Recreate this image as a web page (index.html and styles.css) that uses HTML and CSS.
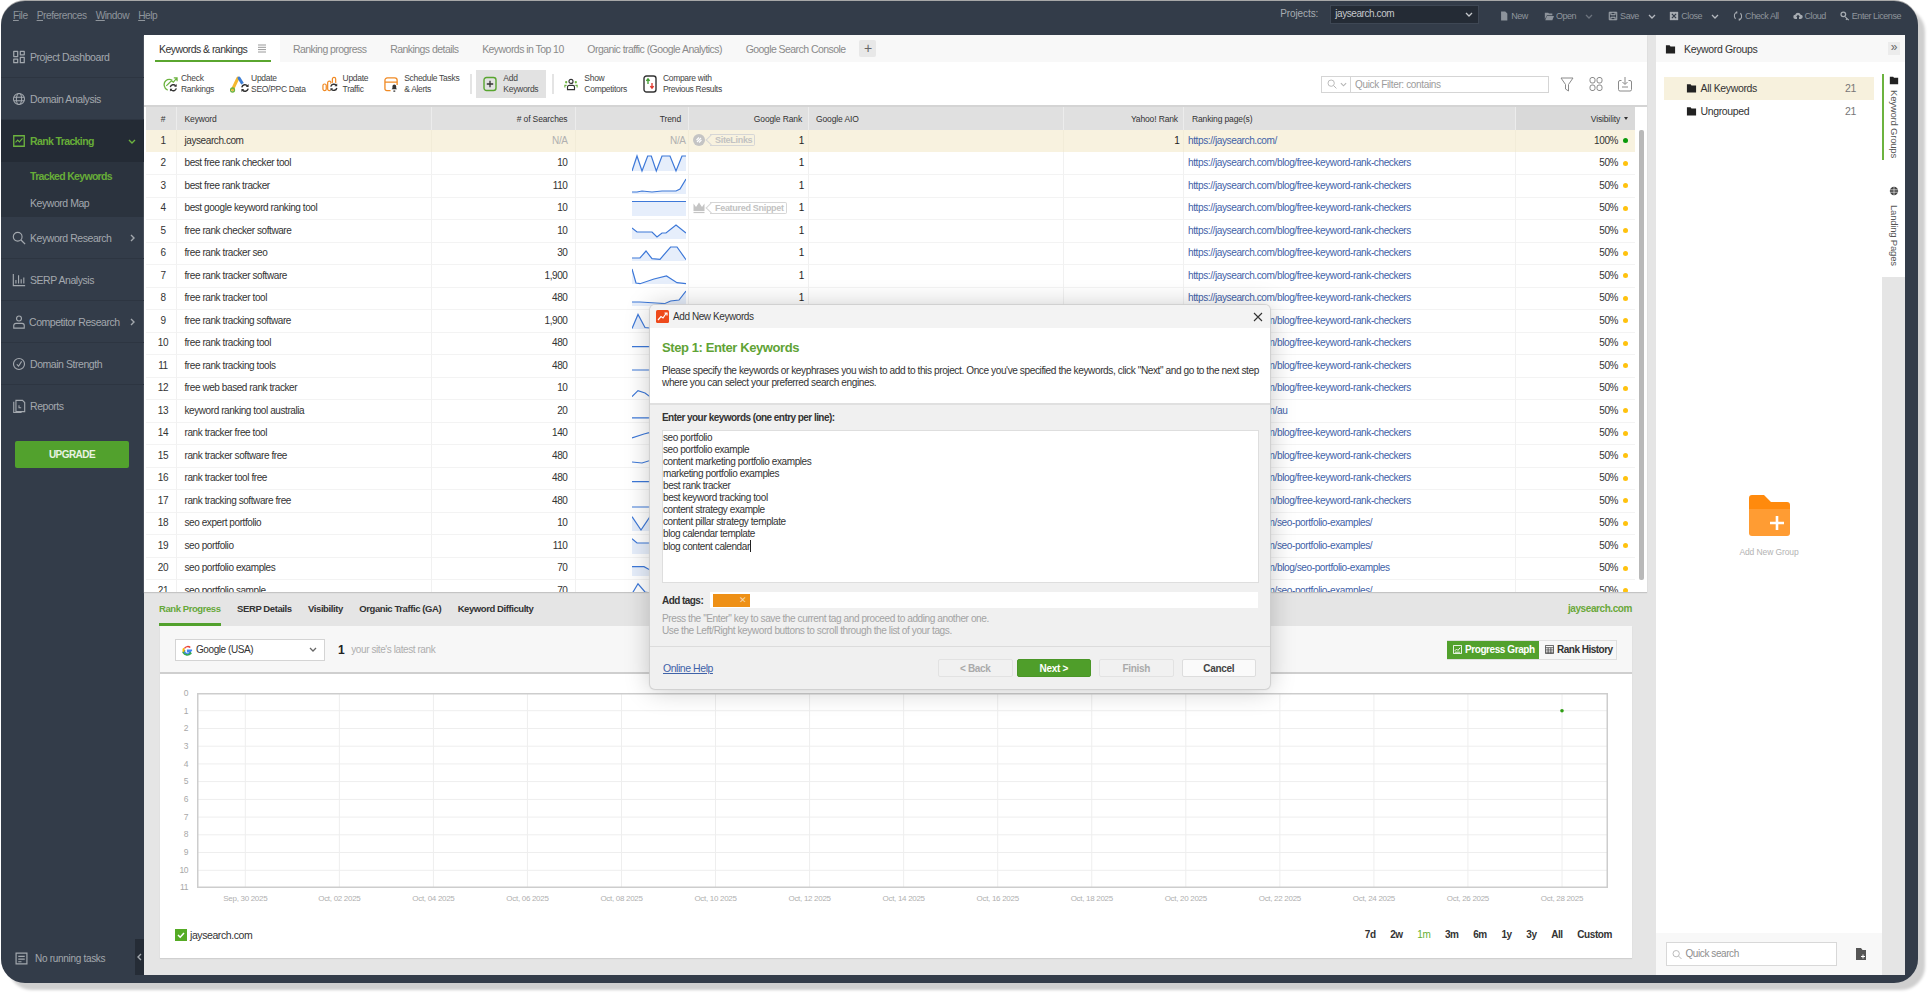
FILE: index.html
```html
<!DOCTYPE html>
<html lang="en">
<head>
<meta charset="utf-8">
<title>Rank Tracker</title>
<link rel="stylesheet" href="styles.css">
</head>
<body>
<svg class="defs" width="0" height="0" aria-hidden="true">
  <symbol id="refresh" viewBox="0 0 10 10"><circle cx="5" cy="5" r="5" fill="#fff"/><path d="M1.8 4.3A3.3 3.3 0 0 1 7.6 3M8.2 5.7A3.3 3.3 0 0 1 2.4 7" fill="none" stroke="#333" stroke-width="1.5"/><path d="M8.6 1v3H5.8zM1.4 9V6h2.8z" fill="#333"/></symbol>
  <symbol id="folder" viewBox="0 0 12 12"><path d="M1 2h4l1 1.3h5V11H1z" fill="#222"/></symbol>
  <symbol id="caret" viewBox="0 0 8 5"><path d="M1 1l3 3 3-3" fill="none" stroke="currentColor" stroke-width="1.3"/></symbol>
</svg>
<div class="window">
  <header class="topbar">
    <nav class="menu"><span><u>F</u>ile</span><span><u>P</u>references</span><span><u>W</u>indow</span><span><u>H</u>elp</span></nav>
    <div class="projects">
      <span class="projects-label">Projects:</span>
      <div class="project-select"><span>jaysearch.com</span><svg class="ic-caret"><use href="#caret"/></svg></div>
    </div>
    <div class="tools">
      <span class="tool t-new"><svg class="tic" viewBox="0 0 12 12"><path d="M2.5 0.5h5l2.5 2.5v8.500h-7.5z" fill="#8d939b"/></svg>New</span>
      <span class="tool t-open"><svg class="tic" viewBox="0 0 12 12"><path d="M1 2h4l1 1h4v2H3.500L1 10zM3.500 6H12l-2 5H1.500z" fill="#8d939b"/></svg>Open<svg class="tcaret dim"><use href="#caret"/></svg></span>
      <span class="tool t-save"><svg class="tic" viewBox="0 0 12 12"><path d="M1.500 1.500h9v9h-9zM3.500 1.500v3h5v-3M3.500 10.500v-3h5v3" fill="none" stroke="#a7acb2" stroke-width="1.200"/></svg>Save<svg class="tcaret"><use href="#caret"/></svg></span>
      <span class="tool t-close"><svg class="tic" viewBox="0 0 12 12"><path d="M1 1h10v10H1z" fill="#a7acb2"/><path d="M3.500 3.500l5 5M8.500 3.500l-5 5" stroke="#333c49" stroke-width="1.500"/></svg>Close<svg class="tcaret"><use href="#caret"/></svg></span>
      <span class="tool t-check"><svg class="tic" viewBox="0 0 12 12"><path d="M5 1.500C1.500 2 .5 6 3 9.500M7 10.500C10.500 10 11.500 6 9 2.500" fill="none" stroke="#a7acb2" stroke-width="1.300"/><path d="M5 0v3.500L2.800 1.500zM7 12V8.500l2.200 2z" fill="#a7acb2"/></svg>Check All</span>
      <span class="tool t-cloud"><svg class="tic" viewBox="0 0 12 12"><path d="M3 9.500a2.500 2.500 0 0 1-.3-5 3.400 3.400 0 0 1 6.500 0 2.500 2.500 0 0 1 0 5H7.200V7h1.300L6 4.500 3.500 7h1.300v2.500z" fill="#a7acb2"/></svg>Cloud</span>
      <span class="tool t-lic"><svg class="tic" viewBox="0 0 12 12"><circle cx="4" cy="4" r="2.800" fill="none" stroke="#a7acb2" stroke-width="1.500"/><path d="M6 6l5 4.500-1 1-1.500-1.300-1 .8-.8-1L7.500 9 5.200 7z" fill="#a7acb2"/></svg>Enter License</span>
    </div>
  </header>

  <div class="body">
    <aside class="sidebar">
      <a class="nav"><svg class="nic" viewBox="0 0 16 16"><path d="M2 1.500h4.500v6H2zM9.500 1.500H14v4H9.500zM2 10.500h4.500v4H2zM9.500 8.500H14v6H9.500z" fill="none" stroke="#a3a8ae" stroke-width="1.400" stroke-linejoin="round"/></svg>Project Dashboard</a>
      <a class="nav"><svg class="nic" viewBox="0 0 16 16"><g fill="none" stroke="#a3a8ae" stroke-width="1.200"><circle cx="8" cy="8" r="6.300"/><ellipse cx="8" cy="8" rx="3" ry="6.300"/><path d="M2 6h12M2 10h12"/></g></svg>Domain Analysis</a>
      <a class="nav nav-active"><svg class="nic" viewBox="0 0 16 16"><path d="M2 2h12v12H2z" fill="none" stroke="#6cb33f" stroke-width="1.500"/><path d="M4 9.500l2.500-2.500 2 2 3.500-4" fill="none" stroke="#6cb33f" stroke-width="1.300"/></svg>Rank Tracking<svg class="chev chev-down" viewBox="0 0 8 5"><path d="M1 1l3 3 3-3" fill="none" stroke="#6cb33f" stroke-width="1.400"/></svg></a>
      <div class="subnav">
        <a class="sub sub-active">Tracked Keywords</a>
        <a class="sub">Keyword Map</a>
      </div>
      <a class="nav"><svg class="nic" viewBox="0 0 16 16"><circle cx="6.500" cy="6.500" r="5" fill="none" stroke="#a3a8ae" stroke-width="1.300"/><path d="M10.300 10.300L15 15" stroke="#a3a8ae" stroke-width="1.500"/></svg>Keyword Research<svg class="chev" viewBox="0 0 5 8"><path d="M1 1l3 3-3 3" fill="none" stroke="#a3a8ae" stroke-width="1.400"/></svg></a>
      <a class="nav"><svg class="nic" viewBox="0 0 16 16"><path d="M1.500 1v13.500H15M4.500 8v4M7.500 2.500V12M10.500 7v5M13.500 5v7" fill="none" stroke="#a3a8ae" stroke-width="1.300"/></svg>SERP Analysis</a>
      <a class="nav nav-tight"><svg class="nic" viewBox="0 0 16 16"><circle cx="8" cy="4" r="2.800" fill="none" stroke="#a3a8ae" stroke-width="1.300"/><path d="M2 15v-3a2.500 2.500 0 0 1 2.500-2.500h7A2.500 2.500 0 0 1 14 12v3z" fill="none" stroke="#a3a8ae" stroke-width="1.300"/></svg>Competitor Research<svg class="chev" viewBox="0 0 5 8"><path d="M1 1l3 3-3 3" fill="none" stroke="#a3a8ae" stroke-width="1.400"/></svg></a>
      <a class="nav"><svg class="nic" viewBox="0 0 16 16"><circle cx="8" cy="8" r="6.300" fill="none" stroke="#a3a8ae" stroke-width="1.300"/><path d="M5.500 8.500L7.500 10.500 11 5" fill="none" stroke="#a3a8ae" stroke-width="1.300"/></svg>Domain Strength</a>
      <a class="nav nav-last"><svg class="nic" viewBox="0 0 16 16"><path d="M4.500 1.500H12l2.500 2.500v10.500h-10zM2 3v12.500h9" fill="none" stroke="#a3a8ae" stroke-width="1.300"/><path d="M8 7v3h2.500" fill="none" stroke="#a3a8ae" stroke-width="1.200"/></svg>Reports</a>
      <button class="upgrade">UPGRADE</button>
      <div class="side-foot">
        <svg class="task-ic" viewBox="0 0 12 12"><path d="M1 1h10v10H1zM3 4h6M3 6.500h6M3 9h3" fill="none" stroke="#a3a8ae" stroke-width="1.100"/></svg>
        <span class="task-text">No running tasks</span>
        <span class="collapse"><svg viewBox="0 0 5 8"><path d="M4 1L1 4l3 3" fill="none" stroke="#a3a8ae" stroke-width="1.400"/></svg></span>
      </div>
    </aside>

    <main class="main">
      <section class="top-pane">
        <div class="tabs">
          <div class="tab tab-active">Keywords &amp; rankings<svg class="tab-menu" viewBox="0 0 8 9"><path d="M0 1h8M0 3.300h8M0 5.600h8M0 8h8" stroke="#999" stroke-width="1"/></svg></div>
          <div class="tab">Ranking progress</div>
          <div class="tab">Rankings details</div>
          <div class="tab">Keywords in Top 10</div>
          <div class="tab">Organic traffic (Google Analytics)</div>
          <div class="tab">Google Search Console</div>
          <div class="tab-add">+</div>
        </div>
        <div class="toolbar">
          <div class="tb tb-check"><svg class="tbi w15" viewBox="0 0 16 18"><path d="M5 15.500C1 14 0 8 3 5.500 5 3.800 8 4 10 5" fill="none" stroke="#6cb33f" stroke-width="1.400"/><path d="M3.500 11L9 5.500l2 1.500 3.500-4M11.500 2.500h3.500V6" fill="none" stroke="#6cb33f" stroke-width="1.300"/><use href="#refresh" x="6" y="8" width="10" height="10"/></svg><span>Check<br>Rankings</span></div>
          <div class="tb tb-ads"><svg class="tbi w20" viewBox="0 0 20 18"><path d="M2.500 14.500L8 3" stroke="#f5b82e" stroke-width="3" stroke-linecap="round"/><path d="M9 3l5.500 9" stroke="#3f7fd6" stroke-width="3" stroke-linecap="round" fill="none"/><circle cx="2.500" cy="15" r="2" fill="none" stroke="#6cb33f" stroke-width="1.300"/><use href="#refresh" x="10" y="8" width="10" height="10"/></svg><span>Update<br>SEO/PPC Data</span></div>
          <div class="tb"><svg class="tbi w17" viewBox="0 0 18 18"><g fill="none" stroke="#f08a24" stroke-width="1.300"><rect x="1" y="9" width="3.500" height="7" rx="1.700"/><rect x="6" y="6" width="3.500" height="10" rx="1.700"/><rect x="11" y="2" width="3.500" height="8" rx="1.700"/></g><use href="#refresh" x="7.500" y="7.500" width="10" height="10"/></svg><span>Update<br>Traffic</span></div>
          <div class="tb tb-sched"><svg class="tbi w15" viewBox="0 0 16 18"><path d="M7 16H3a2 2 0 0 1-2-2V5a2.500 2.500 0 0 1 2.500-2.500h8A2.500 2.500 0 0 1 14 5v5M1 7h13" fill="none" stroke="#f08a24" stroke-width="1.400"/><path d="M11 9.500a2 2 0 0 1 2 2v2l1 1.200H8l1-1.200v-2a2 2 0 0 1 2-2zM10 16h2v1.200h-2z" fill="#333"/></svg><span>Schedule Tasks<br>&amp; Alerts</span></div>
          <i class="tsep tsep-a"></i>
          <div class="tb tb-on"><svg class="tbi w14" viewBox="0 0 14 16"><rect x="1" y="1.500" width="12" height="13" rx="2.500" fill="none" stroke="#58a52f" stroke-width="1.400"/><path d="M7 4.800v6.400M3.800 8h6.400" stroke="#333" stroke-width="1.300"/></svg><span>Add<br>Keywords</span></div>
          <i class="tsep tsep-b"></i>
          <div class="tb tb-show"><svg class="tbi w14" viewBox="0 0 16 16"><circle cx="8" cy="5" r="2.300" fill="none" stroke="#333" stroke-width="1.300"/><path d="M4 14.500v-3a2 2 0 0 1 2-2h4a2 2 0 0 1 2 2v3z" fill="none" stroke="#333" stroke-width="1.300"/><circle cx="2.500" cy="6" r="1.300" fill="#6cb33f"/><circle cx="13.500" cy="6" r="1.300" fill="#6cb33f"/><path d="M1 12v-2.500h2M15 12V9.500h-2" fill="none" stroke="#6cb33f" stroke-width="1.300"/></svg><span>Show<br>Competitors</span></div>
          <div class="tb tb-cmp"><svg class="tbi w14" viewBox="0 0 14 18"><rect x="1" y="1" width="12" height="16" rx="2.500" fill="none" stroke="#333" stroke-width="1.400"/><path d="M5 9V4M3.300 5.800L5 3.800l1.700 2" fill="none" stroke="#3f9c2e" stroke-width="1.300"/><path d="M9 8v5M7.300 11.200L9 13.200l1.700-2" fill="none" stroke="#e0352b" stroke-width="1.300"/></svg><span>Compare with<br>Previous Results</span></div>
          <div class="tb-right">
            <div class="qfilter">
              <span class="qf-drop"><svg class="qf-s" viewBox="0 0 12 12"><circle cx="5" cy="5" r="3.800" fill="none" stroke="#b5b5b5" stroke-width="1.100"/><path d="M8 8l3.300 3.300" stroke="#b5b5b5" stroke-width="1.200"/></svg><svg class="qf-c"><use href="#caret"/></svg></span>
              <span class="qf-text">Quick Filter: contains</span>
            </div>
            <svg class="ri" viewBox="0 0 16 16"><path d="M2 2h12L9.500 8.500V15L6.500 13V8.500z" fill="none" stroke="#8a8a8a" stroke-width="1"/></svg>
            <svg class="ri" viewBox="0 0 16 16"><g fill="none" stroke="#8a8a8a" stroke-width="1"><rect x="2" y="1.500" width="5" height="5.500" rx="2"/><rect x="9" y="1.500" width="5" height="5.500" rx="2"/><rect x="2" y="9" width="5" height="5.500" rx="2"/><rect x="9" y="9" width="5" height="5.500" rx="2"/></g></svg>
            <svg class="ri" viewBox="0 0 16 16"><path d="M4.500 4.500H3a1.500 1.500 0 0 0-1.500 1.500v7.500A1.500 1.500 0 0 0 3 15h10a1.500 1.500 0 0 0 1.500-1.500V6A1.500 1.500 0 0 0 13 4.500h-1.500M8 1v7M5.500 6L8 8.500 10.500 6M5 11h6" fill="none" stroke="#8a8a8a" stroke-width="1"/></svg>
          </div>
        </div>
        <div class="table-wrap">
          <div class="table">
            <div class="row head">
              <span class="c-n">#</span><span class="c-k">Keyword</span><span class="c-s"># of Searches</span><span class="c-t">Trend</span><span class="c-g">Google Rank</span><span class="c-a">Google AIO</span><span class="c-y">Yahoo! Rank</span><span class="c-l">Ranking page(s)</span><span class="c-v c-sorted">Visibility<i class="sort"></i></span>
            </div>
            <div class="rows">
              <div class="row row-sel"><span class="c-n">1</span><span class="c-k">jaysearch.com</span><span class="c-s na">N/A</span><span class="c-t na">N/A</span><span class="c-g"><svg class="serp" viewBox="0 0 12 12"><circle cx="6" cy="6" r="6" fill="#c4c4c4"/><path d="M4 8l4-4M3.500 6L6 3.500M6 8.500L8.500 6" stroke="#fff" stroke-width="1.100"/></svg><span class="tag">SiteLinks</span><b class="rk">1</b></span><span class="c-a"></span><span class="c-y"><b class="rk">1</b></span><a class="c-l">https://jaysearch.com/</a><span class="c-v">100%<i class="dot dot-g"></i></span></div>
              <div class="row"><span class="c-n">2</span><span class="c-k">best free rank checker tool</span><span class="c-s">10</span><span class="c-t"><svg class="spark" viewBox="0 0 54 22"><polygon class="sf" points="0,19 5,4 10,19 15.700,4 19.300,4 24.300,19 30,4 38,4 44,19 50,4 54,4 54,19"/><polyline class="sl" points="0,19 5,4 10,19 15.700,4 19.300,4 24.300,19 30,4 38,4 44,19 50,4 54,4"/></svg></span><span class="c-g"><b class="rk">1</b></span><span class="c-a"></span><span class="c-y"></span><a class="c-l">https://jaysearch.com/blog/free-keyword-rank-checkers</a><span class="c-v">50%<i class="dot"></i></span></div>
              <div class="row"><span class="c-n">3</span><span class="c-k">best free rank tracker</span><span class="c-s">110</span><span class="c-t"><svg class="spark" viewBox="0 0 54 22"><polygon class="sf" points="0,17 5,17 10,16 20,17 30,16 44,16 48,14 54,4 54,19 0,19"/><polyline class="sl" points="0,17 5,17 10,16 20,17 30,16 44,16 48,14 54,4"/></svg></span><span class="c-g"><b class="rk">1</b></span><span class="c-a"></span><span class="c-y"></span><a class="c-l">https://jaysearch.com/blog/free-keyword-rank-checkers</a><span class="c-v">50%<i class="dot"></i></span></div>
              <div class="row"><span class="c-n">4</span><span class="c-k">best google keyword ranking tool</span><span class="c-s">10</span><span class="c-t"><svg class="spark" viewBox="0 0 54 22"><polygon class="sf" points="0,4.500 54,4.500 54,19 0,19"/><polyline class="sl" points="0,4.500 54,4.500"/></svg></span><span class="c-g"><svg class="serp" viewBox="0 0 12 12"><path d="M0.500 1.500L3 5 6 0.500 9 5l2.500-3.500V9H.5z" fill="#c4c4c4"/><path d="M.5 10.500h11" stroke="#c4c4c4" stroke-width="1.200"/></svg><span class="tag">Featured Snippet</span><b class="rk">1</b></span><span class="c-a"></span><span class="c-y"></span><a class="c-l">https://jaysearch.com/blog/free-keyword-rank-checkers</a><span class="c-v">50%<i class="dot"></i></span></div>
              <div class="row"><span class="c-n">5</span><span class="c-k">free rank checker software</span><span class="c-s">10</span><span class="c-t"><svg class="spark" viewBox="0 0 54 22"><polygon class="sf" points="0,8 5,12 20,12 25,17 30,13 34,13 44,5 54,13 54,19 0,19"/><polyline class="sl" points="0,8 5,12 20,12 25,17 30,13 34,13 44,5 54,13"/></svg></span><span class="c-g"><b class="rk">1</b></span><span class="c-a"></span><span class="c-y"></span><a class="c-l">https://jaysearch.com/blog/free-keyword-rank-checkers</a><span class="c-v">50%<i class="dot"></i></span></div>
              <div class="row"><span class="c-n">6</span><span class="c-k">free rank tracker seo</span><span class="c-s">30</span><span class="c-t"><svg class="spark" viewBox="0 0 54 22"><polygon class="sf" points="0,16 8,16 14,9 20,16.700 28,17.300 38.600,5 45,5 54,17.700 54,19 0,19"/><polyline class="sl" points="0,16 8,16 14,9 20,16.700 28,17.300 38.600,5 45,5 54,17.700"/></svg></span><span class="c-g"><b class="rk">1</b></span><span class="c-a"></span><span class="c-y"></span><a class="c-l">https://jaysearch.com/blog/free-keyword-rank-checkers</a><span class="c-v">50%<i class="dot"></i></span></div>
              <div class="row"><span class="c-n">7</span><span class="c-k">free rank tracker software</span><span class="c-s">1,900</span><span class="c-t"><svg class="spark" viewBox="0 0 54 22"><polygon class="sf" points="0,4 4,18 8,18.700 22,14 34.500,11 45,17.700 54,18.700 54,19 0,19"/><polyline class="sl" points="0,4 4,18 8,18.700 22,14 34.500,11 45,17.700 54,18.700"/></svg></span><span class="c-g"><b class="rk">1</b></span><span class="c-a"></span><span class="c-y"></span><a class="c-l">https://jaysearch.com/blog/free-keyword-rank-checkers</a><span class="c-v">50%<i class="dot"></i></span></div>
              <div class="row"><span class="c-n">8</span><span class="c-k">free rank tracker tool</span><span class="c-s">480</span><span class="c-t"><svg class="spark" viewBox="0 0 54 22"><polygon class="sf" points="0,15 8,15 24,16 32.500,16.700 38.600,14 47,13 54,4 54,19 0,19"/><polyline class="sl" points="0,15 8,15 24,16 32.500,16.700 38.600,14 47,13 54,4"/></svg></span><span class="c-g"><b class="rk">1</b></span><span class="c-a"></span><span class="c-y"></span><a class="c-l">https://jaysearch.com/blog/free-keyword-rank-checkers</a><span class="c-v">50%<i class="dot"></i></span></div>
              <div class="row"><span class="c-n">9</span><span class="c-k">free rank tracking software</span><span class="c-s">1,900</span><span class="c-t"><svg class="spark" viewBox="0 0 54 22"><polygon class="sf" points="0,18.500 6,4.500 13,17.500 18,18 54,18 54,19 0,19"/><polyline class="sl" points="0,18.500 6,4.500 13,17.500 18,18 54,18"/></svg></span><span class="c-g"><b class="rk">1</b></span><span class="c-a"></span><span class="c-y"></span><a class="c-l">https://jaysearch.com/blog/free-keyword-rank-checkers</a><span class="c-v">50%<i class="dot"></i></span></div>
              <div class="row"><span class="c-n">10</span><span class="c-k">free rank tracking tool</span><span class="c-s">480</span><span class="c-t"><svg class="spark" viewBox="0 0 54 22"><polyline class="sl" points="0,14.700 54,14.700"/></svg></span><span class="c-g"><b class="rk">1</b></span><span class="c-a"></span><span class="c-y"></span><a class="c-l">https://jaysearch.com/blog/free-keyword-rank-checkers</a><span class="c-v">50%<i class="dot"></i></span></div>
              <div class="row"><span class="c-n">11</span><span class="c-k">free rank tracking tools</span><span class="c-s">480</span><span class="c-t"><svg class="spark" viewBox="0 0 54 22"><polyline class="sl" points="0,15 54,15"/></svg></span><span class="c-g"><b class="rk">1</b></span><span class="c-a"></span><span class="c-y"></span><a class="c-l">https://jaysearch.com/blog/free-keyword-rank-checkers</a><span class="c-v">50%<i class="dot"></i></span></div>
              <div class="row"><span class="c-n">12</span><span class="c-k">free web based rank tracker</span><span class="c-s">10</span><span class="c-t"><svg class="spark" viewBox="0 0 54 22"><polyline class="sl" points="0,19.700 6,13.700 13,16 18,19.700 54,19"/></svg></span><span class="c-g"><b class="rk">1</b></span><span class="c-a"></span><span class="c-y"></span><a class="c-l">https://jaysearch.com/blog/free-keyword-rank-checkers</a><span class="c-v">50%<i class="dot"></i></span></div>
              <div class="row"><span class="c-n">13</span><span class="c-k">keyword ranking tool australia</span><span class="c-s">20</span><span class="c-t"><svg class="spark" viewBox="0 0 54 22"><polyline class="sl" points="0,17.800 54,17.800"/></svg></span><span class="c-g"><b class="rk">1</b></span><span class="c-a"></span><span class="c-y"></span><a class="c-l">https://jaysearch.com/au</a><span class="c-v">50%<i class="dot"></i></span></div>
              <div class="row"><span class="c-n">14</span><span class="c-k">rank tracker free tool</span><span class="c-s">140</span><span class="c-t"><svg class="spark" viewBox="0 0 54 22"><polyline class="sl" points="0,16 12,12 17,10.700 20,12 54,12"/></svg></span><span class="c-g"><b class="rk">1</b></span><span class="c-a"></span><span class="c-y"></span><a class="c-l">https://jaysearch.com/blog/free-keyword-rank-checkers</a><span class="c-v">50%<i class="dot"></i></span></div>
              <div class="row"><span class="c-n">15</span><span class="c-k">rank tracker software free</span><span class="c-s">480</span><span class="c-t"><svg class="spark" viewBox="0 0 54 22"><polyline class="sl" points="0,17 10,18 18,15.500 54,15.500"/></svg></span><span class="c-g"><b class="rk">1</b></span><span class="c-a"></span><span class="c-y"></span><a class="c-l">https://jaysearch.com/blog/free-keyword-rank-checkers</a><span class="c-v">50%<i class="dot"></i></span></div>
              <div class="row"><span class="c-n">16</span><span class="c-k">rank tracker tool free</span><span class="c-s">480</span><span class="c-t"><svg class="spark" viewBox="0 0 54 22"><polyline class="sl" points="0,14.700 54,14.700"/></svg></span><span class="c-g"><b class="rk">1</b></span><span class="c-a"></span><span class="c-y"></span><a class="c-l">https://jaysearch.com/blog/free-keyword-rank-checkers</a><span class="c-v">50%<i class="dot"></i></span></div>
              <div class="row"><span class="c-n">17</span><span class="c-k">rank tracking software free</span><span class="c-s">480</span><span class="c-t"><svg class="spark" viewBox="0 0 54 22"><polyline class="sl" points="0,17 54,17"/></svg></span><span class="c-g"><b class="rk">1</b></span><span class="c-a"></span><span class="c-y"></span><a class="c-l">https://jaysearch.com/blog/free-keyword-rank-checkers</a><span class="c-v">50%<i class="dot"></i></span></div>
              <div class="row"><span class="c-n">18</span><span class="c-k">seo expert portfolio</span><span class="c-s">10</span><span class="c-t"><svg class="spark" viewBox="0 0 54 22"><polygon class="sf" points="0,4.700 9,18 18,4.700 54,4.700 54,19 0,19"/><polyline class="sl" points="0,4.700 9,18 18,4.700 54,4.700"/></svg></span><span class="c-g"><b class="rk">1</b></span><span class="c-a"></span><span class="c-y"></span><a class="c-l">https://jaysearch.com/seo-portfolio-examples/</a><span class="c-v">50%<i class="dot"></i></span></div>
              <div class="row"><span class="c-n">19</span><span class="c-k">seo portfolio</span><span class="c-s">110</span><span class="c-t"><svg class="spark" viewBox="0 0 54 22"><polygon class="sf" points="0,3.800 5,8 54,8 54,19 0,19"/><polyline class="sl" points="0,3.800 5,8 54,8"/></svg></span><span class="c-g"><b class="rk">1</b></span><span class="c-a"></span><span class="c-y"></span><a class="c-l">https://jaysearch.com/seo-portfolio-examples/</a><span class="c-v">50%<i class="dot"></i></span></div>
              <div class="row"><span class="c-n">20</span><span class="c-k">seo portfolio examples</span><span class="c-s">70</span><span class="c-t"><svg class="spark" viewBox="0 0 54 22"><polygon class="sf" points="0,9.700 12,9.700 18,13 54,13 54,19 0,19"/><polyline class="sl" points="0,9.700 12,9.700 18,13 54,13"/></svg></span><span class="c-g"><b class="rk">1</b></span><span class="c-a"></span><span class="c-y"></span><a class="c-l">https://jaysearch.com/blog/seo-portfolio-examples</a><span class="c-v">50%<i class="dot"></i></span></div>
              <div class="row"><span class="c-n">21</span><span class="c-k">seo portfolio sample</span><span class="c-s">70</span><span class="c-t"><svg class="spark" viewBox="0 0 54 22"><polyline class="sl" points="0,13.800 6,3.800 13,12 18,13 54,13"/></svg></span><span class="c-g"><b class="rk">1</b></span><span class="c-a"></span><span class="c-y"></span><a class="c-l">https://jaysearch.com/seo-portfolio-examples/</a><span class="c-v">50%<i class="dot"></i></span></div>
            </div>
          </div>
          <div class="vscroll"><i></i></div>
        </div>
      </section>

      <section class="bottom-pane">
        <div class="btabs">
          <span class="btab btab-active">Rank Progress</span>
          <span class="btab">SERP Details</span>
          <span class="btab">Visibility</span>
          <span class="btab">Organic Traffic (GA)</span>
          <span class="btab">Keyword Difficulty</span>
          <span class="btabs-site">jaysearch.com</span>
        </div>
        <div class="card">
          <div class="card-head">
            <div class="engine"><svg class="g-logo" viewBox="0 0 12 12"><path d="M11 6.200H6.200v1.700h3A3.200 3.200 0 0 1 2.800 6" fill="none" stroke="#4285f4" stroke-width="1.700"/><path d="M2.800 6l-1.600 2.600A5.200 5.200 0 0 0 9.600 9.700L8.400 8.500" fill="none" stroke="#34a853" stroke-width="1.700"/><path d="M1.200 8.500a5.200 5.200 0 0 1 0-5L2.900 5a3.200 3.200 0 0 0 0 2z" fill="#fbbc05"/><path d="M2.100 3.700a5.200 5.200 0 0 1 7.500-1.100L8.400 3.800A3.200 3.200 0 0 0 3.300 5z" fill="#ea4335"/></svg><span>Google (USA)</span><svg class="ic-caret dark"><use href="#caret"/></svg></div>
            <b class="latest-n">1</b><span class="latest">your site's latest rank</span>
            <div class="seg">
              <span class="seg-on"><svg class="seg-i" viewBox="0 0 10 10"><path d="M.5.500h9v9h-9z" fill="none" stroke="#fff"/><path d="M2 6.500l2-2 1.500 1.500L8 3M2 8h6" fill="none" stroke="#fff"/></svg>Progress Graph</span>
              <span class="seg-off"><svg class="seg-i" viewBox="0 0 10 10"><path d="M.5.500h9v9h-9zM.5 3h9M.5 5.500h9M.5 8h9M3.500 3v6.500M6.500 3v6.500" fill="none" stroke="#444" stroke-width=".9"/></svg>Rank History</span>
            </div>
          </div>
          <div class="chart">
            <div class="chart-main">
              <div class="ylabels"><span>0</span><span>1</span><span>2</span><span>3</span><span>4</span><span>5</span><span>6</span><span>7</span><span>8</span><span>9</span><span>10</span><span>11</span></div>
              <svg class="plot" viewBox="0 0 1411 195"><path class="grid" d="M0 17.700H1411M0 35.500H1411M0 53.200H1411M0 70.900H1411M0 88.600H1411M0 106.400H1411M0 124.100H1411M0 141.800H1411M0 159.500H1411M0 177.300H1411M48.300 0V195M142.350 0V195M236.400 0V195M330.450 0V195M424.500 0V195M518.550 0V195M612.600 0V195M706.650 0V195M800.700 0V195M894.750 0V195M988.800 0V195M1082.850 0V195M1176.900 0V195M1270.950 0V195M1365 0V195"/><rect class="frame" x=".75" y=".75" width="1409.500" height="193.500"/><circle cx="1365" cy="17.700" r="1.800" fill="#2f9e14"/></svg>
            </div>
            <div class="xlabels"><span>Sep, 30 2025</span><span>Oct, 02 2025</span><span>Oct, 04 2025</span><span>Oct, 06 2025</span><span>Oct, 08 2025</span><span>Oct, 10 2025</span><span>Oct, 12 2025</span><span>Oct, 14 2025</span><span>Oct, 16 2025</span><span>Oct, 18 2025</span><span>Oct, 20 2025</span><span>Oct, 22 2025</span><span>Oct, 24 2025</span><span>Oct, 26 2025</span><span>Oct, 28 2025</span></div>
            <div class="legend">
              <span class="legend-site"><svg class="check" viewBox="0 0 12 12"><rect width="12" height="12" fill="#55ab25"/><path d="M3 6l2.200 2.200L9 4" fill="none" stroke="#fff" stroke-width="1.500"/></svg>jaysearch.com</span>
              <span class="ranges"><b>7d</b><b>2w</b><b class="range-on">1m</b><b>3m</b><b>6m</b><b>1y</b><b>3y</b><b>All</b><b>Custom</b></span>
            </div>
          </div>
        </div>
      </section>
    </main>

    <aside class="right">
      <div class="r-head">
        <svg class="r-f"><use href="#folder"/></svg><span>Keyword Groups</span>
        <span class="r-collapse">»</span>
      </div>
      <div class="r-body">
        <div class="groups">
          <div class="grp grp-on"><svg class="g-f"><use href="#folder"/></svg><span>All Keywords</span><em>21</em></div>
          <div class="grp"><svg class="g-f"><use href="#folder"/></svg><span>Ungrouped</span><em>21</em></div>
          <div class="empty">
            <svg class="big-folder" viewBox="0 0 41 41"><path d="M0 3a3 3 0 0 1 3-3h12l7 7h16a3 3 0 0 1 3 3v6H0z" fill="#ff8a0d"/><path d="M0 14h41v24a3 3 0 0 1-3 3H3a3 3 0 0 1-3-3z" fill="#ff9c33"/><path d="M28 21v14M21 28h14" stroke="#fff" stroke-width="2.600"/></svg>
            <span>Add New Group</span>
          </div>
          <div class="g-foot">
            <div class="qsearch"><svg class="qs-i" viewBox="0 0 12 12"><circle cx="5" cy="5" r="3.800" fill="none" stroke="#b5b5b5" stroke-width="1.100"/><path d="M8 8l3.300 3.300" stroke="#b5b5b5" stroke-width="1.200"/></svg><span>Quick search</span></div>
            <svg class="add-f" viewBox="0 0 12 14"><path d="M1 1h5l1.500 2H11v10H1z" fill="#555"/><path d="M8 7.500v4M6 9.500h4" stroke="#fff"/></svg>
          </div>
        </div>
        <div class="vtabs">
          <div class="vtab vtab-on"><svg class="v-f"><use href="#folder"/></svg><span>Keyword Groups</span></div>
          <div class="vtab"><svg class="v-g" viewBox="0 0 12 12"><circle cx="6" cy="6" r="5" fill="#444"/><path d="M1 4.500h10M1 7.500h10M6 1v10" stroke="#fff" stroke-width=".7"/></svg><span>Landing Pages</span></div>
        </div>
      </div>
    </aside>
  </div>

  <div class="dialog">
    <div class="d-title">
      <svg class="d-logo" viewBox="0 0 13 13"><rect width="13" height="13" rx="1.500" fill="#ee4a1c"/><path d="M2 10l3-3.500 2 1.500 3-4.500M8.500 3h2.500v2.500" fill="none" stroke="#fff" stroke-width="1.200"/></svg>
      <span>Add New Keywords</span>
      <svg class="d-x" viewBox="0 0 10 10"><path d="M1 1l8 8M9 1l-8 8" stroke="#333" stroke-width="1.100"/></svg>
    </div>
    <div class="d-head">
      <h2>Step 1: Enter Keywords</h2>
      <p>Please specify the keywords or keyphrases you wish to add to this project. Once you've specified the keywords, click "Next" and go to the next step<br>where you can select your preferred search engines.</p>
    </div>
    <div class="d-body">
      <label class="d-label">Enter your keywords (one entry per line):</label>
      <div class="kw-input">seo portfolio<br>seo portfolio example<br>content marketing portfolio examples<br>marketing portfolio examples<br>best rank tracker<br>best keyword tracking tool<br>content strategy example<br>content pillar strategy template<br>blog calendar template<br>blog content calendar<i class="caret"></i></div>
      <div class="tags-row">
        <label class="d-label">Add tags:</label>
        <div class="tags-field"><span class="tagchip">✕</span></div>
      </div>
      <p class="hint">Press the "Enter" key to save the current tag and proceed to adding another one.<br>Use the Left/Right keyword buttons to scroll through the list of your tags.</p>
    </div>
    <div class="d-foot">
      <a class="help">Online Help</a>
      <button class="btn" disabled>&lt; Back</button>
      <button class="btn btn-next">Next &gt;</button>
      <button class="btn" disabled>Finish</button>
      <button class="btn btn-cancel">Cancel</button>
    </div>
  </div>
</div>
</body>
</html>
```

FILE: styles.css
```css
* { box-sizing: border-box; }
html, body { margin: 0; height: 100%; overflow: hidden; background: #fff; }
body { font: 10px/12px "Liberation Sans", Arial, sans-serif; letter-spacing: -.42px; color: #333; }
.defs { position: absolute; }
a { color: inherit; text-decoration: none; }
b { font-weight: 700; }
em { font-style: normal; }

.window {
  position: relative; margin: 1px 0 0 1px; width: 1917px; height: 982px;
  display: flex; flex-direction: column; padding-bottom: 8px;
  background: #333c49; border-radius: 24px;
  box-shadow: 0 -1px 0 #a8a8a8, 7px 7px 3px #cfcfcf;
}

/* top bar */
.topbar { height: 34px; flex: none; display: flex; align-items: center; padding-bottom: 4px; color: #8f959c; }
.menu { display: flex; margin-left: 12px; gap: 9px; font-size: 10.2px; letter-spacing: -.45px; }
.projects { display: flex; align-items: center; margin-left: auto; margin-top: -4px; letter-spacing: -.1px; }
.projects-label { color: #a7acb2; margin-right: 12px; }
.project-select {
  width: 149px; height: 19px; display: flex; align-items: center; justify-content: space-between;
  padding: 0 5px 0 4px; background: #242b35; border: 1px solid #3e4754; color: #c5c8cc; letter-spacing: -.42px;
}
.ic-caret { width: 8px; height: 5px; color: #c5c8cc; }
.ic-caret.dark { color: #666; }
.tools { display: flex; align-items: center; margin-left: 20px; margin-right: 17px; font-size: 9px; letter-spacing: -.45px; }
.tool { display: flex; align-items: center; }
.tic { width: 10px; height: 12px; margin-right: 2px; }
.tcaret { width: 8px; height: 5px; margin-left: 9px; color: #b5b9bf; }
.tcaret.dim { color: #6c737d; }
.t-open { margin-left: 16px; }
.t-save { margin-left: 15px; }
.t-close { margin-left: 13.5px; }
.t-check { margin-left: 14px; }
.t-cloud { margin-left: 14px; }
.t-lic { margin-left: 14px; }

.body { flex: 1; min-height: 0; display: flex; padding-right: 13px; }

/* sidebar */
.sidebar { width: 143px; flex: none; display: flex; flex-direction: column; padding-top: 1px; color: #a3a8ae; font-size: 10.5px; letter-spacing: -.45px; }
.nav { height: 42px; flex: none; display: flex; align-items: center; padding-left: 11px; position: relative; border-bottom: 1px solid #2d3541; }
.nic { width: 14px; height: 14px; margin-right: 4px; flex: none; }
.nav-tight .nic { margin-right: 3px; }
.nav-last { border-bottom: 0; }
.nav-active { background: #242b35; color: #67ad38; font-weight: 700; border-bottom: 0; letter-spacing: -.62px; }
.chev { width: 5px; height: 8px; margin-left: auto; margin-right: 9px; }
.chev-down { width: 8px; height: 5px; margin-right: 8px; }
.subnav { flex: none; background: #2b333e; padding-bottom: 1px; }
.sub { display: flex; align-items: center; height: 27px; padding-left: 29px; }
.sub-active { color: #67ad38; font-weight: 700; letter-spacing: -.68px; }
.upgrade {
  display: block; flex: none; margin: 14px 0 0 14px; width: 114px; height: 27px;
  background: #52a12d; border: 0; border-radius: 2px; color: #e9f3e2;
  font: 700 10px "Liberation Sans", Arial, sans-serif; letter-spacing: -.55px;
}
.side-foot { margin-top: auto; height: 36px; display: flex; align-items: center; padding-left: 14px; position: relative; }
.task-ic { width: 13px; height: 13px; margin: 3px 7px 0 0; }
.task-text { font-size: 10px; letter-spacing: -.3px; margin-top: 3px; }
.collapse { margin-left: auto; width: 9px; height: 36px; background: #252c36; display: flex; align-items: center; justify-content: center; }
.collapse svg { width: 5px; height: 8px; }

/* main */
.main { width: 1512px; flex: none; display: flex; flex-direction: column; background: #e5e5e5; }
.top-pane { height: 557px; flex: none; margin-right: 9px; background: #fff; display: flex; flex-direction: column; box-shadow: 0 1px 1px #c4c4c4; }
.tabs { height: 27px; flex: none; display: flex; align-items: center; gap: 23.7px; background: #f8f8f8; font-size: 10.5px; letter-spacing: -.55px; color: #8a8a8a; }
.tab { white-space: nowrap; }
.tab-active { position: relative; width: 136px; height: 27px; margin-right: -10.7px; padding-left: 15px; display: flex; align-items: center; background: #fff; color: #333; }
.tab-active::after { content: ""; position: absolute; left: 11px; width: 116px; bottom: 0; height: 2px; background: #5aa62f; }
.tab-menu { width: 8px; height: 9px; margin-left: 11px; }
.tab-add { width: 17px; height: 17px; margin-left: -10px; background: #e8e8e8; border-radius: 2px; color: #666; text-align: center; font-size: 14px; line-height: 16px; }

.toolbar { height: 45px; flex: none; display: flex; align-items: center; gap: 16px; padding: 1px 0 0 19px; border-bottom: 2px solid #d4d4d4; color: #444; line-height: 11px; font-size: 8.5px; letter-spacing: -.3px; }
.tb { display: flex; align-items: center; gap: 4px; white-space: nowrap; }
.tb-check { gap: 3px; }
.tb-ads { gap: 1px; }
.tb-sched { gap: 5px; }
.tb-cmp { gap: 6px; }
.tbi { height: 18px; flex: none; }
.w15 { width: 15px; } .w20 { width: 20px; } .w17 { width: 17px; } .w14 { width: 14px; }
.tsep { width: 2px; height: 20px; background: #e4e4e4; }
.tsep-a { margin: 0 -12px 0 -5px; }
.tsep-b { margin: 0 -6px 0 -10px; }
.tb-on { background: #e2e2e2; height: 28px; width: 70px; padding-left: 7px; gap: 6px; }
.tb-show { gap: 6px; }
.tb-right { margin-left: auto; display: flex; align-items: center; gap: 13px; padding-right: 14px; }
.tb-right .qfilter { margin-right: -3px; }
.qfilter { width: 228px; height: 17px; display: flex; border: 1px solid #d5d5d5; }
.qf-drop { width: 29px; flex: none; display: flex; align-items: center; gap: 3px; padding-left: 5px; border-right: 1px solid #d5d5d5; }
.qf-s { width: 10px; height: 10px; }
.qf-c { width: 7px; height: 5px; color: #b5b5b5; }
.qf-text { padding-left: 4px; color: #9c9c9c; line-height: 15px; font-size: 10px; letter-spacing: -.35px; }
.ri { width: 16px; height: 16px; }

.table-wrap { flex: 1; min-height: 0; display: flex; padding-left: 2px; }
.table { width: 1489px; flex: none; display: flex; flex-direction: column; }
.rows { flex: 1; min-height: 0; overflow: hidden; }
.row {
  display: grid; height: 22.5px; align-items: stretch;
  grid-template-columns: 31px 255px 143.5px 113.5px 120px 255px 120px 332px 119px;
}
.row > * { display: flex; align-items: center; border-right: 1px solid #f1f1f1; border-bottom: 1px solid #f3f3f3; min-width: 0; white-space: nowrap; }
.head { height: 22.5px; background: #e0e0e0; color: #333; font-size: 8.5px; letter-spacing: -.13px; }
.head > * { border-right: 1px solid #ececec; border-bottom: 0; padding-top: 1px; }
.c-n { justify-content: center; padding-left: 7px; padding-right: 3px; }
.c-k { padding-left: 7.5px; }
.c-s, .c-t { justify-content: flex-end; padding-right: 7px; }
.c-t { padding-right: 2.5px; }
.head .c-t { padding-right: 7px; }
.c-g { justify-content: flex-end; padding-right: 4px; position: relative; }
.head .c-g { padding-right: 6px; }
.c-a { padding-left: 7px; }
.c-y { justify-content: flex-end; padding-right: 3.5px; }
.head .c-y { padding-right: 5px; }
.c-l { padding-left: 4px; color: #3f62a8; font-size: 10.1px; }
.head .c-l { padding-left: 8px; color: #333; font-size: 8.5px; }
.c-v { justify-content: flex-end; padding-right: 7px; border-right: 0 !important; }
.c-sorted { background: #d9d9d9; }
.sort { width: 0; height: 0; margin-left: 4px; border: 2.5px solid transparent; border-top: 3px solid #333; border-bottom: 0; }
.dot { width: 5px; height: 5px; margin-left: 5px; border-radius: 50%; background: #ffc20e; }
.dot-g { background: #0a9a0a; }
.row-sel > * { background: #f8f2df; border-bottom: 0; border-right-color: #f2ecd8; }
.na { color: #b0b0b0; }
.rk { font-weight: 400; color: #222; }
.spark { width: 54px; height: 22px; display: block; }
.sf { fill: #e6eefb; }
.sl { fill: none; stroke: #3d78d8; stroke-width: 1.2; }
.serp { position: absolute; left: 4px; top: 4.5px; width: 12px; height: 12px; }
.tag {
  position: absolute; left: 21px; top: 4.5px; height: 12px; padding: 0 2px 0 5px;
  border: 1px solid #d6d6d6; border-left: 0; border-radius: 0 2px 2px 0;
  color: #c2c2c2; font-weight: 700; font-size: 9px; line-height: 10px; letter-spacing: -.3px;
}
.tag::before {
  content: ""; position: absolute; left: -3.5px; top: 1.2px; width: 7.4px; height: 7.4px;
  border-left: 1px solid #d6d6d6; border-bottom: 1px solid #d6d6d6; transform: rotate(45deg);
}
.vscroll { flex: 1; padding: 1px 3px 0 4px; }
.vscroll i { display: block; margin-top: 22px; width: 5px; height: 450px; border-radius: 2px; background: #b9b9b9; }

/* bottom pane */
.bottom-pane { flex: 1; min-height: 0; display: flex; flex-direction: column; }
.btabs { height: 34px; flex: none; display: flex; align-items: center; padding-left: 15px; margin-right: 24px; font-weight: 700; font-size: 9.5px; color: #333; gap: 16.5px; }
.btab { line-height: 34px; height: 34px; white-space: nowrap; }
.btab-active { color: #66a83a; border-bottom: 3px solid #52a12d; }
.btabs-site { margin-left: auto; color: #6aa83a; font-size: 10px; }
.card { margin-left: 16px; width: 1472px; height: 332px; flex: none; background: #fff; box-shadow: 0 1px 1px #d0d0d0; }
.card-head { height: 48px; display: flex; align-items: center; padding: 1px 15px 0; background: #f7f7f7; border-bottom: 2px solid #cfcfcf; }
.engine { width: 150px; height: 22px; display: flex; align-items: center; padding: 0 7px 0 6px; background: #fff; border: 1px solid #d4d4d4; color: #333; }
.engine span { margin-right: auto; margin-left: 3px; }
.g-logo { width: 11px; height: 12px; }
.latest-n { margin-left: 13px; font-size: 12px; color: #222; }
.latest { margin-left: 7px; color: #aeaeae; }
.seg { margin-left: auto; display: flex; height: 20px; border: 1px solid #dfdfdf; border-left: 0; }
.seg > * { display: flex; align-items: center; }
.seg-i { width: 9px; height: 9px; margin-right: 3px; }
.seg-on { width: 92px; background: #52a12d; color: #fff; padding-left: 6px; font-weight: 700; }
.seg-off { width: 77px; padding-left: 6px; background: #f7f7f7; font-weight: 700; color: #333; letter-spacing: -.5px; }
.chart { padding-top: 19px; }
.chart-main { display: flex; height: 195px; }
.ylabels { width: 37px; flex: none; padding-right: 9px; margin-top: -9px; color: #a8a8a8; font-size: 8.5px; display: grid; grid-auto-rows: 17.7px; justify-items: end; align-items: center; }
.plot { width: 1411px; height: 195px; flex: none; }
.grid { fill: none; stroke: #eee; stroke-width: 1; }
.frame { fill: none; stroke: #cdcdcd; stroke-width: 1.5; }
.xlabels { display: flex; margin-left: 38.3px; margin-top: 5px; }
.xlabels span { width: 94.05px; flex: none; text-align: center; color: #b0b0b0; font-size: 8px; letter-spacing: -.3px; white-space: nowrap; }
.legend { display: flex; align-items: center; justify-content: space-between; padding: 0 20px 0 15px; margin-top: 24px; }
.legend-site { display: flex; align-items: center; gap: 3px; color: #333; font-size: 10.5px; }
.check { width: 12px; height: 12px; }
.ranges { display: flex; gap: 14.6px; color: #333; }
.range-on { color: #66b032; font-weight: 400; }

/* right panel */
.right { flex: 1; min-width: 0; display: flex; flex-direction: column; background: #fff; }
.r-head { height: 27px; flex: none; display: flex; align-items: center; padding-left: 9px; background: #f8f8f8; font-size: 10.5px; letter-spacing: -.35px; color: #333; }
.r-f { width: 11px; height: 12px; margin-right: 8px; }
.r-collapse { margin-left: auto; margin-right: 5px; width: 12px; height: 13px; background: #ececec; text-align: center; color: #666; line-height: 11px; font-size: 12px; }
.r-body { flex: 1; min-height: 0; display: flex; }
.groups { width: 226px; flex: none; display: flex; flex-direction: column; padding-top: 15px; }
.grp { margin-left: 8px; width: 210px; height: 22.5px; flex: none; display: flex; align-items: center; padding: 0 18px 0 22px; font-size: 10.5px; letter-spacing: -.35px; color: #333; }
.grp-on { background: #f7f1dd; }
.grp em { margin-left: auto; color: #777; }
.g-f { width: 11px; height: 12px; margin-right: 3.5px; }
.empty { margin-top: 373px; display: flex; flex-direction: column; align-items: center; gap: 11px; color: #b3b3b3; font-size: 8.5px; line-height: 10px; letter-spacing: -.1px; }
.big-folder { width: 41px; height: 41px; }
.g-foot { margin-top: auto; height: 42px; flex: none; background: #f8f8f8; display: flex; align-items: center; padding-left: 9.5px; }
.qsearch { width: 171px; height: 24px; display: flex; align-items: center; gap: 4px; padding-left: 5px; background: #fff; border: 1px solid #d8d8d8; color: #8e8e8e; }
.qs-i { width: 10px; height: 11px; }
.add-f { width: 12px; height: 14px; margin-left: 18px; }
.vtabs { flex: 1; background: #e5e5e5; display: flex; flex-direction: column; }
.vtab { height: 105px; display: flex; flex-direction: column; align-items: center; background: #fff; padding-top: 13px; font-size: 9.5px; letter-spacing: -.2px; color: #555; }
.vtab span { writing-mode: vertical-rl; margin-top: 8px; white-space: nowrap; }
.vtab-on { position: relative; height: 110px; padding-top: 12px; }
.vtab-on span { margin-top: 4px; }
.vtab-on::before { content: ""; position: absolute; left: 0; top: 12px; bottom: 0; width: 2px; background: #6cb33f; height: 86px; }
.v-f { width: 10px; height: 12px; }
.v-g { width: 10px; height: 12px; }

/* dialog */
.dialog {
  position: absolute; left: 649px; top: 304px; width: 620px; height: 384px;
  display: flex; flex-direction: column; background: #f0f0f0; border-radius: 5px;
  box-shadow: 0 0 1px 1px #cfcfcf, 0 1px 26px rgba(0,0,0,.22);
  overflow: hidden;
}
.d-title { height: 23px; flex: none; display: flex; align-items: center; padding-left: 6px; background: #f3f3f3; color: #333; }
.d-logo { width: 13px; height: 13px; margin-right: 4px; }
.d-x { width: 10px; height: 10px; margin-left: auto; margin-right: 7px; }
.d-head { height: 77px; flex: none; padding: 12px 0 0 12px; background: #fff; border-bottom: 2px solid #e0e0e0; }
.d-head h2 { margin: 0 0 9px; font: 700 13px/16px "Liberation Sans", Arial, sans-serif; letter-spacing: -.4px; color: #5fa335; }
.d-head p { margin: 0; white-space: nowrap; color: #333; font-size: 10.1px; letter-spacing: -.41px; }
.d-body { flex: 1; min-height: 0; padding: 7px 12px 0; border-bottom: 1px solid #dcdcdc; }
.d-label { display: block; font-weight: 700; color: #333; white-space: nowrap; letter-spacing: -.55px; }
.kw-input { margin-top: 6px; width: 597px; height: 153px; padding: 1px 0; background: #fff; border: 1px solid #dedede; color: #333; }
.caret { display: inline-block; width: 1px; height: 12px; margin-bottom: -2px; background: #222; }
.tags-row { display: flex; align-items: center; margin-top: 9px; }
.tags-row .d-label { width: 47.5px; flex: none; margin-top: 2px; }
.tags-field { width: 549px; height: 16px; background: #fff; padding: 1.5px 0 0 3px; }
.tagchip { display: block; width: 37px; height: 13px; padding-right: 3px; background: #ee9016; color: #f7d7ae; text-align: right; font-size: 9px; line-height: 13px; }
.hint { margin: 5px 0 0; color: #a3a3a3; font-size: 10.1px; letter-spacing: -.43px; white-space: nowrap; }
.d-foot { height: 42px; flex: none; display: flex; align-items: flex-start; padding: 12px 14px 0 13px; }
.help { margin-right: auto; margin-top: 3px; color: #3f62a8; text-decoration: underline; font-size: 10.5px; letter-spacing: -.45px; }
.btn { width: 74.5px; height: 18px; margin-left: 4px; padding: 0; background: #f1f1f1; border: 1px solid #e2e2e2; border-radius: 2px; font: 700 10px "Liberation Sans", Arial, sans-serif; letter-spacing: -.3px; color: #aaa; }
.btn-next { background: #4f9e2a; border-color: #4a9627; color: #fff; }
.btn-next + .btn { margin-left: 8px; }
.btn-cancel { margin-left: 8px; background: #fafafa; border-color: #ddd; color: #444; }
```
